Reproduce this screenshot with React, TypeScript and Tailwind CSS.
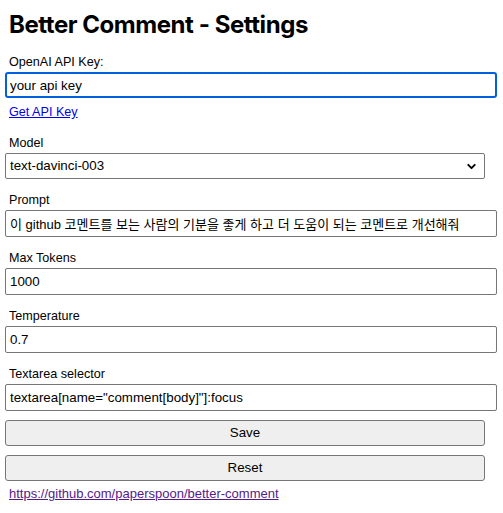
import { ChevronDown } from "lucide-react";

const font = { fontFamily: '"Liberation Sans", Arial, "Noto Sans CJK KR", sans-serif' };

function Field({ label, value, small }: { label: string; value: string; small?: boolean }) {
  return (
    <div className="mb-[11px]">
      <div className="h-4 px-1 pt-[2px] text-[12.6px] leading-4 text-black">{label}</div>
      <input
        readOnly
        value={value}
        className={
          "mt-1 block h-[27px] w-[492px] rounded-[2px] border border-[#767676] bg-white px-1 text-black outline-none " +
          (small ? "text-[13px]" : "text-[13.33px]")
        }
      />
    </div>
  );
}

export default function App() {
  return (
    <div className="min-h-screen bg-white px-[5px] text-black" style={font}>
      <h1
        className="px-1 pt-[10px] text-[24px] font-bold leading-[29px] tracking-[-0.45px]"
        style={{ fontFamily: 'Inter, "Liberation Sans", sans-serif' }}
      >
        Better Comment - Settings
      </h1>

      {/* API key */}
      <div className="mt-[13px]">
        <div className="h-4 px-1 pt-[2px] text-[12.6px] leading-4">OpenAI API Key:</div>
        <input
          readOnly
          value="your api key"
          className="mt-1 block h-[26px] w-[492px] rounded-[3px] border-2 border-[#0060df] bg-white px-[3px] text-[13.33px] outline-none"
        />
        <a href="#" className="mt-1 block h-4 px-1 pt-[2px] text-[12.6px] leading-4 text-[#0000ee] underline">
          Get API Key
        </a>
      </div>

      {/* Model */}
      <div className="mt-[15px] mb-[11px]">
        <div className="h-4 px-1 pt-[2px] text-[12.6px] leading-4">Model</div>
        <div className="relative mt-1 w-[480px]">
          <select
            defaultValue="text-davinci-003"
            className="block h-[26px] w-[480px] appearance-none rounded-[2px] border border-[#767676] bg-white px-1 text-[13.33px] text-black outline-none"
          >
            <option>text-davinci-003</option>
            <option>gpt-3.5-turbo</option>
          </select>
          <ChevronDown
            size={13}
            strokeWidth={3.5}
            className="pointer-events-none absolute right-[7px] top-[7px] text-black"
          />
        </div>
      </div>

      <Field small label="Prompt" value="이 github 코멘트를 보는 사람의 기분을 좋게 하고 더 도움이 되는 코멘트로 개선해줘" />
      <Field label="Max Tokens" value="1000" />
      <Field label="Temperature" value="0.7" />
      <div>
        <div className="h-4 px-1 pt-[2px] text-[12.6px] leading-4">Textarea selector</div>
        <input
          readOnly
          value={'textarea[name="comment[body]"]:focus'}
          className="mt-1 block h-[27px] w-[492px] rounded-[2px] border border-[#767676] bg-white px-1 text-[13.33px] outline-none"
        />
      </div>

      <div className="mt-[9px] flex flex-col gap-[9px]">
        <button className="h-[26px] w-[480px] rounded-[3px] border border-[#767676] bg-[#efefef] text-[13.33px] text-black">
          Save
        </button>
        <button className="h-[26px] w-[480px] rounded-[3px] border border-[#767676] bg-[#efefef] text-[13.33px] text-black">
          Reset
        </button>
      </div>

      <a
        href="#"
        className="mt-1 block px-1 pt-px text-[13px] leading-4 text-[#551a8b] underline"
      >
        https://github.com/paperspoon/better-comment
      </a>
    </div>
  );
}
